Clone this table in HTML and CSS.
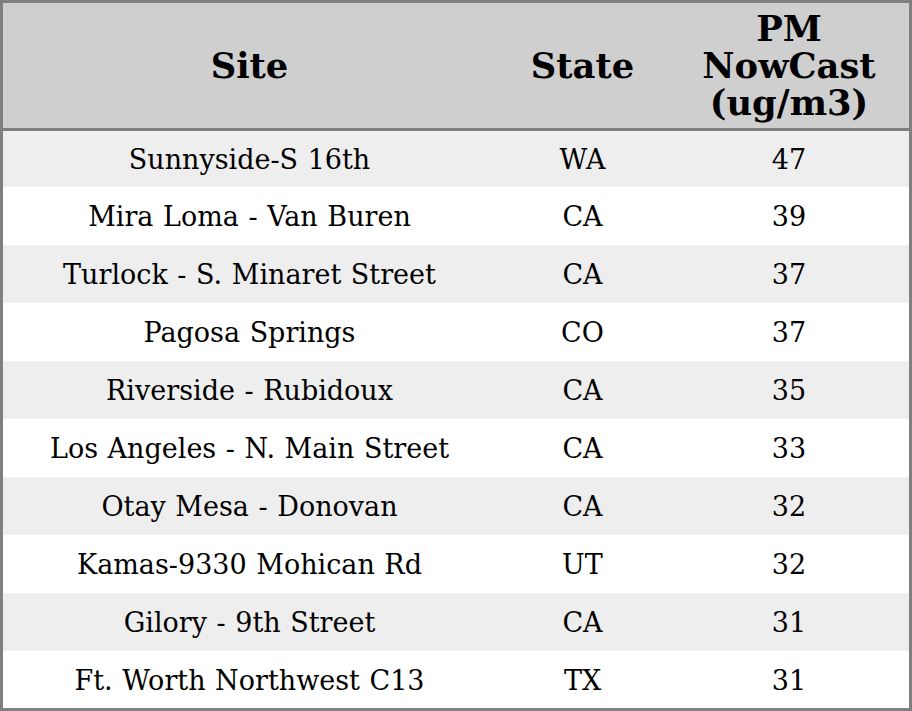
FILE: index.html
```html
<!DOCTYPE html>
<html>
<head>
<meta charset="utf-8">
<link rel="stylesheet" href="styles.css">
</head>
<body>
<div class="frame">
<table class="grid">
<colgroup><col class="c-site"><col class="c-state"><col class="c-pm"></colgroup>
<thead>
<tr class="head"><th>Site</th><th>State</th><th>PM<br>NowCast<br>(ug/m3)</th></tr>
</thead>
<tbody>
<tr class="odd first"><td>Sunnyside-S 16th</td><td>WA</td><td>47</td></tr>
<tr class="even"><td>Mira Loma - Van Buren</td><td>CA</td><td>39</td></tr>
<tr class="odd"><td>Turlock - S. Minaret Street</td><td>CA</td><td>37</td></tr>
<tr class="even"><td>Pagosa Springs</td><td>CO</td><td>37</td></tr>
<tr class="odd"><td>Riverside - Rubidoux</td><td>CA</td><td>35</td></tr>
<tr class="even"><td>Los Angeles - N. Main Street</td><td>CA</td><td>33</td></tr>
<tr class="odd"><td>Otay Mesa - Donovan</td><td>CA</td><td>32</td></tr>
<tr class="even"><td>Kamas-9330 Mohican Rd</td><td>UT</td><td>32</td></tr>
<tr class="odd"><td>Gilory - 9th Street</td><td>CA</td><td>31</td></tr>
<tr class="even last"><td>Ft. Worth Northwest C13</td><td>TX</td><td>31</td></tr>
</tbody>
</table>
</div>
</body>
</html>
```
FILE: styles.css
```css
html, body { margin: 0; padding: 0; background: #fff; }
.frame {
  width: 912px;
  height: 711px;
  box-sizing: border-box;
  border: 3px solid #808080;
  overflow: hidden;
}
.grid {
  width: 906px;
  border-collapse: collapse;
  table-layout: fixed;
  font-family: "DejaVu Serif", serif;
  color: #000;
}
.c-site { width: 493px; }
.c-state { width: 173px; }
.c-pm { width: 240px; }
.head th {
  height: 125px;
  padding: 0;
  background: #cfcfcf;
  font-size: 35.3px;
  font-weight: bold;
  line-height: 37px;
  text-align: center;
  vertical-align: middle;
  border-bottom: 3px solid #808080;
}
tbody td {
  height: 56px;
  padding: 2px 0 0;
  font-size: 27px;
  line-height: 30px;
  word-spacing: 1px;
  text-align: center;
  vertical-align: middle;
}
tbody tr.first td { height: 54px; }
tbody tr.last td { height: 55px; }
tr.odd td { background: #eeeeee; }
tr.even td { background: #ffffff; }
```
